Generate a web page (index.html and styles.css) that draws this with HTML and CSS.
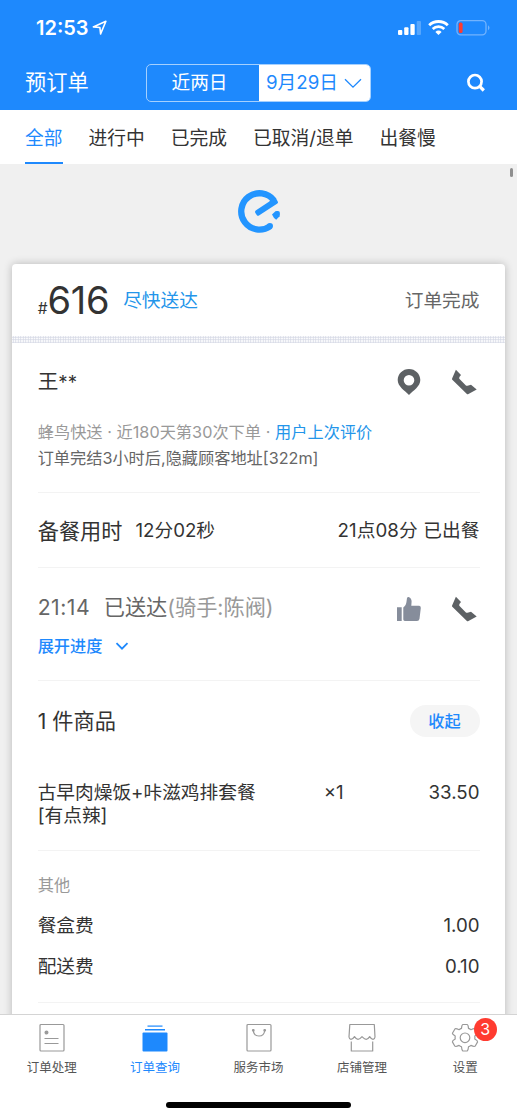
FILE: index.html
```html
<!DOCTYPE html>
<html lang="zh-CN">
<head>
<meta charset="utf-8">
<title>订单查询</title>
<link rel="stylesheet" href="styles.css">
</head>
<body>
<div class="app">
  <header class="header">
    <div class="status">
      <span class="time">12:53</span>
      <svg class="loc" width="16" height="16" viewBox="0 0 16 16"><path d="M1.3 6.9 13.9 1.3 8.6 13.9 7.9 7.5Z" fill="none" stroke="#fff" stroke-width="1.6" stroke-linejoin="round"/></svg>
      <svg class="signals" width="92" height="18" viewBox="0 0 92 18">
        <g fill="#fff"><rect x="0" y="11" width="4.3" height="5" rx="1"/><rect x="6.2" y="8.2" width="4.3" height="7.8" rx="1"/><rect x="12.4" y="5" width="4.3" height="11" rx="1"/><rect x="18.7" y="2" width="4.3" height="14" rx="1" opacity=".25"/></g>
        <path d="M31.2 6.2a13.5 13.5 0 0 1 18.6 0" fill="none" stroke="#fff" stroke-width="2.9"/>
        <path d="M34.7 10a8.4 8.4 0 0 1 11.6 0" fill="none" stroke="#fff" stroke-width="2.7"/>
        <path d="M40.5 15.9 37.4 12.9a4.4 4.4 0 0 1 6.2 0Z" fill="#fff"/>
        <rect x="59" y="1.6" width="29" height="14.2" rx="3.8" fill="none" stroke="#72b3fe" stroke-width="1.3"/>
        <rect x="60.8" y="3.6" width="3.8" height="10.4" rx="1.6" fill="#ff3b30"/>
        <path d="M90 6.2q3 2.5 0 5Z" fill="#72b3fe"/>
      </svg>
    </div>
    <div class="nav">
      <span class="nav-title">预订单</span>
      <div class="segment">
        <span class="seg">近两日</span>
        <span class="seg seg-on">9月29日<svg width="18" height="11" viewBox="0 0 18 11"><path d="M1 1.2 9 9.2 17 1.2" fill="none" stroke="#1e89fd" stroke-width="1.3"/></svg></span>
      </div>
      <svg class="search" width="20" height="20" viewBox="0 0 20 20"><circle cx="9" cy="8.6" r="6.6" fill="none" stroke="#fff" stroke-width="2.7"/><path d="m13.5 13.2 4.3 4.3" stroke="#fff" stroke-width="3.2"/></svg>
    </div>
  </header>
  <nav class="tabs">
    <span class="tab tab-on">全部</span><span class="tab">进行中</span><span class="tab">已完成</span><span class="tab">已取消/退单</span><span class="tab">出餐慢</span>
  </nav>
  <main class="feed">
    <div class="scrollbar"></div>
    <svg class="logo" width="44" height="44" viewBox="0 0 44 44">
      <path d="M32.1 36.2A18.2 18.2 0 1 1 35.9 10.4" fill="none" stroke="#2395ff" stroke-width="6.3"/>
      <circle cx="31.9" cy="36.1" r="3.1" fill="#2395ff"/>
      <path d="M31.3 11.4 34.2 7.2 38.1 8.5 40 12.1Q40.2 13 39.4 13.6L20.6 25.7Q19.6 26.2 18.9 25.2L17.2 22.7Q16.6 21.4 17.7 20.6Z" fill="#2395ff"/>
      <path d="m34 24.6 3.4-3.3q1-.7 2.7-.2l1.5.7q.7 2 0 4.5l-3.4 3.5q-2.5-1.3-4.2-5.2Z" fill="#2395ff"/>
    </svg>
    <article class="card">
      <div class="card-head">
        <span class="order-no"><span class="hash">#</span><span class="number">616</span></span><span class="asap">尽快送达</span><span class="state">订单完成</span>
      </div>
      <div class="perforation"></div>
      <section class="block customer">
        <div class="line name-line">
          <span class="name">王<span class="mask">**</span></span>
          <svg class="pin" width="24" height="28" viewBox="0 0 24 28"><path fill-rule="evenodd" d="M12 1C5.7 1 .7 5.9.7 12.1.7 18.5 7.5 22.5 12 27c4.5-4.5 11.3-8.5 11.3-14.9C23.3 5.9 18.3 1 12 1Zm0 6a5.3 5.3 0 1 1 0 10.6A5.3 5.3 0 0 1 12 7Z" fill="#5d6164"/></svg>
          <svg class="phone" width="26" height="26" viewBox="0 0 26 26"><path d="M4.9.8 10 5.9 8.6 7.8Q8 8.800 8.300 9.800L14.900 16.500Q15.600 17 16.500 16.700L20 15.800 25.700 20.600 17 25.300Q16.400 25.500 15.900 25L1.300 10.700Q.8 10.100 1.100 9.400Z" fill="#5d6164"/></svg>
        </div>
        <p class="small muted">蜂鸟快送 · 近180天第30次下单 · <a class="review">用户上次评价</a></p>
        <p class="small dim">订单完结3小时后,隐藏顾客地址[322m]</p>
      </section>
      <section class="block prep">
        <span class="prep-label">备餐用时</span><span>12分02秒</span><span class="push">21点08分 已出餐</span>
      </section>
      <section class="block delivery">
        <div class="line">
          <span class="when">21:14</span><span class="done">已送达<span class="rider">(骑手:陈阀)</span></span>
          <svg class="thumb" width="26" height="26" viewBox="0 0 26 26"><path d="M1 11.2h4.7V25H1ZM7.3 11.5Q10.2 9.5 10.6 5L11 2Q11.4.9 12.7 1 15.6 2 15.6 5.5L15.3 9.8H23.2Q25 10 24.8 12L23.5 22.7Q23.1 25 21 25H8.8Q7.3 24.8 7.3 23.5Z" fill="#868d9b"/></svg>
          <svg class="phone" width="26" height="26" viewBox="0 0 26 26"><path d="M4.9.8 10 5.9 8.6 7.8Q8 8.800 8.300 9.800L14.900 16.500Q15.600 17 16.500 16.700L20 15.800 25.700 20.600 17 25.300Q16.400 25.500 15.900 25L1.300 10.700Q.8 10.100 1.100 9.400Z" fill="#5d6164"/></svg>
        </div>
        <div class="expand">展开进度<svg width="14" height="9" viewBox="0 0 14 9"><path d="m1.5 1.2 5.5 5.5 5.5-5.5" fill="none" stroke="#1e89fd" stroke-width="1.8"/></svg></div>
      </section>
      <section class="block goods">
        <div class="line goods-head"><span>1 件商品</span><button class="fold">收起</button></div>
        <div class="item"><span class="item-name">古早肉燥饭+咔滋鸡排套餐<br>[有点辣]</span><span class="qty">×1</span><span class="price">33.50</span></div>
      </section>
      <section class="block fees">
        <p class="small muted">其他</p>
        <div class="fee"><span>餐盒费</span><span class="price">1.00</span></div>
        <div class="fee"><span>配送费</span><span class="price">0.10</span></div>
      </section>
    </article>
  </main>
  <footer class="bottom">
    <div class="menu">
      <div class="menu-item"><svg width="30" height="30" viewBox="0 0 30 30" fill="none" stroke="#999" stroke-width="1.2"><rect x="3" y="1.5" width="24" height="26.5" rx="1"/><path d="M7.5 15.5h14M7.5 20.5h14"/><circle cx="9.5" cy="9.5" r="1.4" fill="#999"/></svg><span>订单处理</span></div>
      <div class="menu-item menu-on"><svg width="30" height="30" viewBox="0 0 30 30" fill="#1e89fd"><rect x="2.5" y="9.5" width="25" height="19" rx="1"/><rect x="5" y="6" width="20" height="1.5"/><rect x="7.5" y="2.5" width="15" height="1.2"/></svg><span>订单查询</span></div>
      <div class="menu-item"><svg width="30" height="30" viewBox="0 0 30 30" fill="none" stroke="#999" stroke-width="1.2"><rect x="3" y="1.5" width="24" height="26.5" rx="1"/><path d="M9.3 7.5c.7 7.3 10.7 7.3 11.4 0"/><circle cx="9.3" cy="7.3" r=".8" fill="#999"/><circle cx="20.7" cy="7.3" r=".8" fill="#999"/></svg><span>服务市场</span></div>
      <div class="menu-item"><svg width="30" height="30" viewBox="0 0 30 30" fill="none" stroke="#999" stroke-width="1.2" stroke-linejoin="round"><path d="M2.8 1.5h24.5L28 14q-.2 2-2 2.3c-1.2 0-2-.6-3.3-2.7-1.3 2-2 2.7-3.5 2.7-1.700 0-2.500-1-4.200-2.700-1.500 1.700-2.300 2.700-4 2.700-1.500 0-2.200-.7-3.500-2.700C6.200 15.700 5.200 16.300 4 16.300Q2.200 16 2 14ZM4.300 18.500V28h21.400v-9.500"/></svg><span>店铺管理</span></div>
      <div class="menu-item"><svg width="30" height="30" viewBox="0 0 30 30" fill="none" stroke="#999" stroke-width="1.2" stroke-linejoin="round"><path d="M12.8 1.5h4.4q1 .2 1.3 3.9 1.3.5 2.4 1.3 3-1.5 4-1l2.7 4.5q.1 1-2.8 2.700.2 1.900 0 3.200 2.900 1.800 2.800 2.800l-2.500 4.300q-.8.9-4.200-.8-1.200.8-2.400 1.300-.3 3.700-1.300 4.300h-4.400q-1-.6-1.300-4.300-1.200-.5-2.400-1.300-3.400 1.700-4.200.8L2.400 18.900q-.1-1 2.800-2.800-.2-1.400 0-3.200-2.900-1.700-2.800-2.700l2.700-4.500q1-.5 4 1 1.100-.8 2.400-1.300.3-3.700 1.300-3.900Z"/><circle cx="15" cy="14.8" r="4.8"/></svg><span>设置</span><i class="badge">3</i></div>
    </div>
    <div class="home"></div>
  </footer>
</div>
</body>
</html>
```
FILE: styles.css
```css
* { box-sizing: border-box; }
body {
  margin: 0;
  color: #333;
  font: 18.7px/24px Inter, "Noto Sans CJK SC", sans-serif;
}
p { margin: 0; }
svg { display: block; flex: none; }
.app { width: 517px; height: 1118px; display: flex; flex-direction: column; overflow: hidden; background: #fff; white-space: nowrap; }

.header { height: 110px; flex: none; background: #1e89fd; color: #fff; }
.status { height: 56px; padding: 0 27px 0 36px; display: flex; align-items: center; }
.time { font-size: 20px; font-weight: 600; width: 56px; }
.signals { margin-left: auto; }
.nav { height: 54px; padding: 0 31px 0 25px; display: flex; align-items: center; }
.nav-title { font-size: 21.2px; width: 121px; padding-bottom: 2px; }
.segment { width: 225px; height: 38px; border: 1px solid #a5d0fe; border-radius: 5px; display: flex; overflow: hidden; }
.seg { width: 112px; display: flex; align-items: center; justify-content: center; padding-right: 7px; }
.seg-on { flex: 1; justify-content: flex-start; gap: 6px; padding: 0 0 0 7px; background: #fff; color: #1e89fd; }
.search { margin-left: auto; }

.tabs { height: 54px; flex: none; padding-left: 25px; display: flex; gap: 26px; }
.tab { height: 54px; line-height: 57px; font-size: 18.75px; }
.tab-on { color: #1e89fd; border-bottom: 2px solid #1e89fd; }

.feed { flex: 1; min-height: 0; background: #f0f0f0; padding: 26px 12.5px 0 12px; position: relative; overflow: hidden; }
.scrollbar { position: absolute; top: 4px; right: 4px; width: 3px; height: 9px; border-radius: 2px; background: #8f8f8f; }
.logo { margin: 0 auto 30px 226px; }
.card { height: 900px; background: #fff; border-radius: 4px; box-shadow: 0 0 9px rgba(0,0,0,.24); }
.card-head { height: 72px; padding: 0 25px 0 25.7px; display: flex; align-items: center; }
.order-no { display: flex; align-items: baseline; width: 85.5px; padding-top: 8px; line-height: 72px; }
.hash { font-size: 15.5px; }
.number { font-size: 38px; letter-spacing: -.3px; }
.asap { color: #2395ea; padding-top: 2px; }
.state { margin-left: auto; padding-top: 2px; color: #666; }
.perforation { height: 7px; background: radial-gradient(circle, #d5d9e5 0.8px, transparent 1.2px) 0 0 / 2.5px 2.5px; }

.block { margin: 0 25px 0 25.7px; border-bottom: 1px solid #f3f3f3; }
.line { display: flex; align-items: center; height: 30px; }
.small { font-size: 16.2px; line-height: 26px; }
.muted { color: #999; letter-spacing: .04px; }
.dim { color: #666; }
.review { color: #2395ea; }
.customer { height: 150px; padding-top: 24px; }
.name-line { margin-bottom: 22px; }
.name { font-size: 20.6px; }
.mask { font-size: 18.7px; }
.pin { margin-left: auto; }
.phone { margin-left: 30px; margin-right: 2.5px; }
.prep { height: 75px; padding-top: 2px; display: flex; align-items: center; }
.prep-label { font-size: 21.2px; margin-right: 13px; }
.push { margin-left: auto; letter-spacing: .1px; }
.delivery { height: 113px; padding-top: 25px; font-size: 21.2px; color: #666; }
.delivery .line { height: 31px; }
.when { width: 66px; margin-top: -4px; letter-spacing: .5px; }
.done { margin-top: -4px; }
.rider { color: #999; }
.thumb { margin-left: auto; }
.delivery .phone { margin-left: 29px; }
.expand { display: flex; align-items: center; gap: 13px; margin-top: 10px; font-size: 16.2px; font-weight: 500; color: #1e89fd; }
.goods { height: 170px; padding-top: 24px; }
.goods-head { font-size: 21.2px; height: 32px; justify-content: space-between; }
.fold { width: 70px; height: 32px; padding: 0; border: 0; border-radius: 16px; background: #f5f5f5; color: #1e89fd; font: 500 16.2px/32px Inter, "Noto Sans CJK SC", sans-serif; }
.item { display: grid; grid-template-columns: 286px 80px 1fr; margin-top: 44px; line-height: 23px; }
.price { text-align: right; }
.fees { height: 152px; padding-top: 21px; }
.fee { display: flex; justify-content: space-between; height: 41px; line-height: 41px; }
.fees .small { margin-bottom: 7px; }

.bottom { height: 104px; flex: none; border-top: 1px solid #d4d4d4; background: #fff; }
.menu { display: flex; height: 89px; }
.menu-item { flex: 1; position: relative; display: flex; flex-direction: column; align-items: center; padding-top: 8px; font-size: 12.5px; line-height: 18px; gap: 6px; color: #555; }
.menu-on { color: #1e89fd; }
.badge { position: absolute; left: 60px; top: 3px; width: 23px; height: 23px; border-radius: 50%; background: #ff3b30; color: #fff; font: 16px/23px Inter, sans-serif; text-align: center; }
.home { width: 185px; height: 6px; margin: -2px auto 0; border-radius: 3px; background: #000; }
```
